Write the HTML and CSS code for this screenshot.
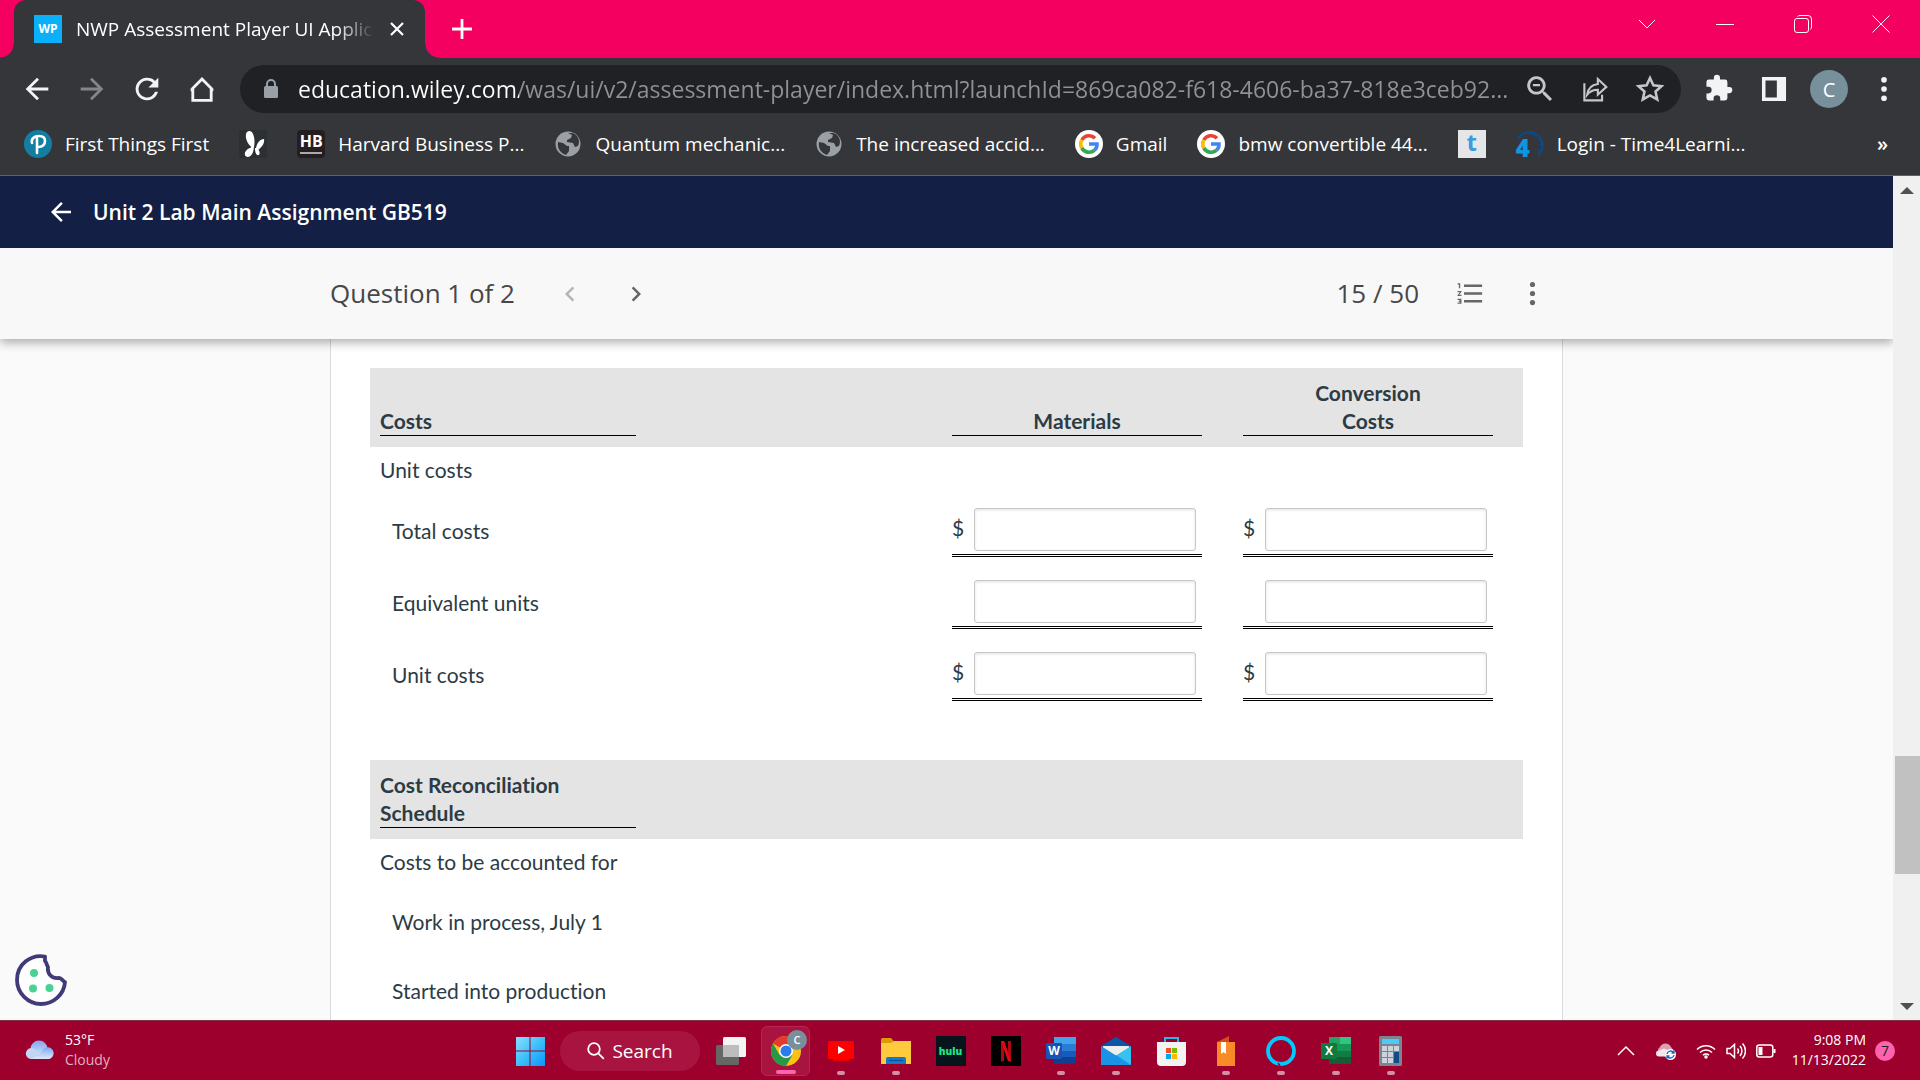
FILE: index.html
```
<!DOCTYPE html>
<html lang="en">
<head>
  <meta charset="UTF-8">
  <meta name="viewport" content="width=device-width, initial-scale=1.0">
  <title>NWP Assessment Player UI Application</title>
  <link rel="stylesheet" href="styles.css">
</head>
<body>
  <!-- browser -->
  <div class="tabstrip">
    <div class="tab">
      <span class="favicon">WP</span>
      <span class="tab-title">NWP Assessment Player UI Applic</span>
      <button class="tab-close" aria-label="Close tab"><svg width="16" height="16" viewBox="0 0 16 16"><path d="M2 2l12 12M14 2L2 14" stroke="#fff" stroke-width="2.2"/></svg></button>
    </div>
    <button class="newtab" aria-label="New tab"><svg width="22" height="22" viewBox="0 0 22 22"><path d="M11 1v20M1 11h20" stroke="#fff" stroke-width="2.8"/></svg></button>
    <div class="winbtns">
      <button aria-label="Tab search"><svg width="18" height="18" viewBox="0 0 18 18"><path d="M1 5l8 8 8-8"/></svg></button>
      <button aria-label="Minimize"><svg width="18" height="18" viewBox="0 0 18 18"><path d="M0 9.500h18"/></svg></button>
      <button aria-label="Restore"><svg width="18" height="18" viewBox="0 0 18 18"><rect x=".5" y="3.500" width="14" height="14" rx="2.500"/><path d="M3.500 1.500q1-1 2.500-1h8q3.500 0 3.500 3.500v8q0 1.500-1 2.500"/></svg></button>
      <button aria-label="Close"><svg width="18" height="18" viewBox="0 0 18 18"><path d="M.5.5l17 17M17.500.5l-17 17"/></svg></button>
    </div>
  </div>
  <div class="navbar">
    <button class="icon" aria-label="Back"><svg viewBox="0 0 24 24"><path d="M20 11H7.830l5.590-5.590L12 4l-8 8 8 8 1.410-1.410L7.830 13H20z"/></svg></button>
    <button class="icon dim" aria-label="Forward"><svg viewBox="0 0 24 24"><path d="M4 11h12.170l-5.590-5.590L12 4l8 8-8 8-1.410-1.410L16.170 13H4z"/></svg></button>
    <button class="icon" aria-label="Reload"><svg viewBox="0 0 24 24"><path d="M17.650 6.350A8 8 0 1 0 19.730 14h-2.080A6 6 0 1 1 12 6c1.660 0 3.140.69 4.220 1.780L13 11h7V4z"/></svg></button>
    <button class="icon" aria-label="Home"><svg viewBox="0 0 24 24"><path d="M12 5L5.500 11.500V20h13v-8.500zM4 12.500h2M18 12.500h2" fill="none" stroke="#f1f3f4" stroke-width="2"/></svg></button>
    <div class="omnibox">
      <svg class="lock" viewBox="0 0 14 20"><path d="M3 8V5a4 4 0 0 1 8 0v3" fill="none" stroke="#9aa0a6" stroke-width="2"/><rect y="7" width="14" height="12" rx="1.500" fill="#9aa0a6"/></svg>
      <input class="url" type="text" aria-label="Address" value="education.wiley.com/was/ui/v2/assessment-player/index.html?launchId=869ca082-f618-4606-ba37-818e3ceb92...">
      <button class="icon grey" aria-label="Zoom"><svg viewBox="0 0 24 24"><path d="M15.500 14h-.8l-.3-.3A6.500 6.500 0 1 0 13.700 14.400l.3.300v.8l5 5 1.500-1.500zm-6 0a4.500 4.500 0 1 1 0-9 4.500 4.500 0 0 1 0 9zM7 8.500h5v1.500H7z"/></svg></button>
      <button class="icon grey" aria-label="Share"><svg viewBox="0 0 24 24"><path d="M14 5l6 5.500-6 5.500v-3.500c-3.500 0-5.500 1-7.500 3.500.5-4 3-7 7.500-7.500zM4.500 8v12H17v-4" fill="none" stroke="#c4c7ca" stroke-width="1.500"/></svg></button>
      <button class="icon grey" aria-label="Bookmark"><svg viewBox="0 0 24 24"><path d="M12 4.200l2.400 5.200 5.700.6-4.200 3.800 1.200 5.600-5.100-2.900-5.100 2.900 1.200-5.600L3.900 10l5.700-.6z" fill="none" stroke="#c4c7ca" stroke-width="1.800"/></svg></button>
    </div>
    <button class="icon" aria-label="Extensions"><svg viewBox="0 0 24 24"><path d="M20.500 11H19V7a2 2 0 0 0-2-2h-4V3.500a2.500 2.500 0 0 0-5 0V5H4a2 2 0 0 0-2 2v3.800h1.500a2.700 2.700 0 0 1 0 5.400H2V20a2 2 0 0 0 2 2h3.800v-1.500a2.700 2.700 0 0 1 5.400 0V22H17a2 2 0 0 0 2-2v-4h1.500a2.500 2.500 0 0 0 0-5z" transform="translate(1.400 1) scale(.87)"/></svg></button>
    <button class="icon" aria-label="Side panel"><svg viewBox="0 0 24 24"><path d="M3.500 3.500h17v17h-17zM6 6v12h8V6z" fill-rule="evenodd"/></svg></button>
    <button class="avatar" aria-label="Profile">C</button>
    <button class="icon" aria-label="Menu"><svg viewBox="0 0 24 24"><circle cx="12" cy="5.500" r="2"/><circle cx="12" cy="12" r="2"/><circle cx="12" cy="18.500" r="2"/></svg></button>
  </div>
  <div class="bookmarks">
    <a class="bookmark" href="#"><svg viewBox="0 0 28 28"><circle cx="14" cy="14" r="14" fill="#137da2"/><path d="M13 23V8M8 13c-1-4 2-7 7-7 4 0 6 2 6 5 0 4-3 6-7 6" fill="none" stroke="#fff" stroke-width="2.600" stroke-linecap="round"/></svg><span>First Things First</span></a>
    <a class="bookmark" href="#" aria-label="Butterfly"><svg viewBox="0 0 28 28"><path fill="#2d3033" d="M0 0h28v28H0z"/><path d="M14 18C8 15 5 6 8 2c5-4 9 5 7 15M15 15c0 5-1 11-6 12-5 0-4-7 2-9M17 18c1-5 4-9 8-9 1 5-3 9-7 12M16 18c3 0 6 4 4 7-3 1-4-3-4-7" fill="#fff"/></svg></a>
    <a class="bookmark" href="#"><span class="hb"><b>HB</b><i></i></span><span>Harvard Business P...</span></a>
    <a class="bookmark" href="#"><svg viewBox="0 0 28 28"><circle cx="14" cy="14" r="12.500" fill="#9aa0a6"/><path d="M4 12l5 1 4 3h2v5l-3 4C6 23 3 18 4 12zM14 3l4 2-1 3-4 2v2l6 1 2 4 3-1c3-6-1-12-6-13z" fill="#35363a"/></svg><span>Quantum mechanic...</span></a>
    <a class="bookmark" href="#"><svg viewBox="0 0 28 28"><circle cx="14" cy="14" r="12.500" fill="#9aa0a6"/><path d="M4 12l5 1 4 3h2v5l-3 4C6 23 3 18 4 12zM14 3l4 2-1 3-4 2v2l6 1 2 4 3-1c3-6-1-12-6-13z" fill="#35363a"/></svg><span>The increased accid...</span></a>
    <a class="bookmark" href="#"><svg viewBox="0 0 28 28"><circle cx="14" cy="14" r="14" fill="#fff"/><g fill="none" stroke-width="3.600"><path d="M20 8.200A8.300 8.300 0 0 0 6.800 10" stroke="#ea4335"/><path d="M6.800 10a8.300 8.300 0 0 0 0 8" stroke="#fbbc05"/><path d="M6.800 18A8.300 8.300 0 0 0 19.500 20.200" stroke="#34a853"/><path d="M19.500 20.200A8 8 0 0 0 22 14h-8" stroke="#4285f4"/></g></svg><span>Gmail</span></a>
    <a class="bookmark" href="#"><svg viewBox="0 0 28 28"><circle cx="14" cy="14" r="14" fill="#fff"/><g fill="none" stroke-width="3.600"><path d="M20 8.200A8.300 8.300 0 0 0 6.800 10" stroke="#ea4335"/><path d="M6.800 10a8.300 8.300 0 0 0 0 8" stroke="#fbbc05"/><path d="M6.800 18A8.300 8.300 0 0 0 19.500 20.200" stroke="#34a853"/><path d="M19.500 20.200A8 8 0 0 0 22 14h-8" stroke="#4285f4"/></g></svg><span>bmw convertible 44...</span></a>
    <a class="bookmark" href="#"><span class="tsite">t</span></a>
    <a class="bookmark" href="#"><span class="four">4<svg viewBox="0 0 28 28"><path d="M2 9A13 13 0 1 1 22 25" fill="none" stroke="#0b4a82" stroke-width="2.500"/><path d="M14 2v4M20 4l-2 3M25 9l-3 2M26 15h-4M24 21l-3-2" stroke="#0b4a82" stroke-width="1.500"/></svg></span><span>Login - Time4Learni...</span></a>
    <button class="more" aria-label="More bookmarks">»</button>
  </div>

  <!-- page -->
  <div class="viewport">
    <div class="player">
      <header class="header">
        <a href="#" class="back" aria-label="Back"><svg viewBox="0 0 24 24"><path d="M20 11H7.830l5.590-5.590L12 4l-8 8 8 8 1.410-1.410L7.830 13H20z"/></svg></a>
        <h1>Unit 2 Lab Main Assignment GB519</h1>
      </header>
      <div class="subbar">
        <div class="subbar-inner">
          <h2>Question 1 of 2</h2>
          <button class="step off" aria-label="Previous"><svg viewBox="0 0 24 24"><path d="M15.410 7.410L14 6l-6 6 6 6 1.410-1.410L10.830 12z"/></svg></button>
          <button class="step" aria-label="Next"><svg viewBox="0 0 24 24"><path d="M8.590 16.590L10 18l6-6-6-6-1.410 1.410L13.170 12z"/></svg></button>
          <span class="score">15 / 50</span>
          <button class="tool" aria-label="Question list"><svg viewBox="0 0 24 24"><path d="M2 17h2v.5H3v1h1v.5H2v1h3v-4H2v1zm1-9h1V4H2v1h1v3zm-1 3h1.800L2 13.100v.9h3v-1H3.200L5 10.900V10H2v1zm5-6v2h14V5H7zm0 14h14v-2H7v2zm0-6h14v-2H7v2z"/></svg></button>
          <button class="tool" aria-label="More"><svg viewBox="0 0 24 24"><circle cx="12" cy="5" r="2"/><circle cx="12" cy="12" r="2"/><circle cx="12" cy="19" r="2"/></svg></button>
        </div>
      </div>
      <main class="scroll">
        <div class="card">
          <table class="sheet">
            <colgroup>
              <col class="c-label"><col class="c-space"><col class="c-num"><col class="c-gap"><col class="c-num"><col class="c-end">
            </colgroup>
            <tr class="band">
              <th scope="col"><div class="rule">Costs</div></th>
              <td></td>
              <th scope="col"><div class="rule mid">Materials</div></th>
              <td></td>
              <th scope="col"><div class="rule mid">Conversion<br>Costs</div></th>
              <td></td>
            </tr>
            <tr class="group"><td colspan="6">Unit costs</td></tr>
            <tr class="entry">
              <td colspan="2">Total costs</td>
              <td class="num"><label class="amount"><span>$</span><input type="text" aria-label="Total costs, materials"></label></td>
              <td></td>
              <td class="num"><label class="amount"><span>$</span><input type="text" aria-label="Total costs, conversion"></label></td>
              <td></td>
            </tr>
            <tr class="entry">
              <td colspan="2">Equivalent units</td>
              <td class="num"><label class="amount"><span></span><input type="text" aria-label="Equivalent units, materials"></label></td>
              <td></td>
              <td class="num"><label class="amount"><span></span><input type="text" aria-label="Equivalent units, conversion"></label></td>
              <td></td>
            </tr>
            <tr class="entry">
              <td colspan="2">Unit costs</td>
              <td class="num"><label class="amount"><span>$</span><input type="text" aria-label="Unit costs, materials"></label></td>
              <td></td>
              <td class="num"><label class="amount"><span>$</span><input type="text" aria-label="Unit costs, conversion"></label></td>
              <td></td>
            </tr>
            <tr class="blank"><td colspan="6"></td></tr>
            <tr class="band">
              <th scope="col"><div class="rule">Cost Reconciliation Schedule</div></th>
              <td colspan="5"></td>
            </tr>
            <tr class="group"><td colspan="6">Costs to be accounted for</td></tr>
            <tr class="line"><td colspan="6">Work in process, July 1</td></tr>
            <tr class="line"><td colspan="6">Started into production</td></tr>
          </table>
        </div>
      </main>
      <button class="cookie" aria-label="Cookie settings">
        <svg viewBox="0 0 52 52"><path d="M30 2.500C16 0 2 10 2 26c0 13 11 24 24 24 12 0 23-9 24-22-3-1-3-4-6-4-7 1-12-4-11-11-2-3-1-4-3-6z" fill="#fff" stroke="#403a78" stroke-width="3.800" stroke-linejoin="round"/><g fill="#4ad295"><circle cx="19" cy="19" r="4"/><circle cx="18" cy="34.500" r="4"/><circle cx="34.500" cy="34" r="4"/></g></svg>
      </button>
    </div>
    <div class="scrollbar">
      <button aria-label="Scroll up"><svg width="14" height="7" viewBox="0 0 14 7"><path d="M0 7l7-7 7 7z"/></svg></button>
      <div class="before"></div>
      <div class="thumb"></div>
      <div class="after"></div>
      <button aria-label="Scroll down"><svg width="14" height="7" viewBox="0 0 14 7"><path d="M0 0l7 7 7-7z"/></svg></button>
    </div>
  </div>

  <!-- windows taskbar -->
  <div class="taskbar">
    <div class="weather">
      <svg viewBox="0 0 30 20"><defs><linearGradient id="cl" x1="0" y1="0" x2="0" y2="1"><stop offset="0" stop-color="#7ea6ee"/><stop offset="1" stop-color="#dfe9fa"/></linearGradient></defs><circle cx="14" cy="9" r="8.500" fill="url(#cl)"/><path d="M5.500 19a5.500 5.500 0 1 1 3-10.500c2 .5 4 2.500 5 5L17 19z" fill="#c3d5f5"/><path d="M6 19h18a6 6 0 1 0-7-8c-1 3-5 5-11 8z" fill="url(#cl)"/></svg>
      <div>53°F<br><small>Cloudy</small></div>
    </div>
    <div class="apps">
      <button class="app" aria-label="Start"><svg viewBox="0 0 30 30"><defs><linearGradient id="wn" x1="0" y1="0" x2="1" y2="1"><stop offset="0" stop-color="#8be0ff"/><stop offset=".5" stop-color="#3cc1fb"/><stop offset="1" stop-color="#0a94fa"/></linearGradient></defs><path fill="url(#wn)" d="M1 1h13.500v13.500H1zM15.500 1H30v13.500H15.500zM1 15.500h13.500V30H1zM15.500 15.500H30V30H15.500z"/></svg></button>
      <button class="search"><svg viewBox="0 0 18 18"><circle cx="7" cy="7" r="5.800"/><path d="M11.300 11.300l5.500 5.500"/></svg>Search</button>
      <button class="app" aria-label="Task view"><svg viewBox="0 0 30 30"><rect y="9" width="23" height="20" rx="1.500" fill="#666"/><rect x="7" y="1" width="23" height="20" rx="1.500" fill="#f4f4f4"/><path d="M7 9h16v12H8.500Q7 21 7 19.500z" fill="#bdbdbd"/></svg></button>
      <button class="app active" aria-label="Chrome"><svg viewBox="0 0 30 30"><circle cx="15" cy="15" r="15" fill="#fbc116"/><path d="M15 15L2 7.500A15 15 0 0 1 28 7.500z" fill="#e33b2e"/><path d="M2 7.500A15 15 0 0 0 15 30l6.500-11.200L8.500 18.800z" fill="#279847"/><circle cx="15" cy="15" r="7" fill="#fff"/><circle cx="15" cy="15" r="5.500" fill="#2c7bea"/></svg><span class="badge">C</span></button>
      <button class="app open" aria-label="YouTube"><svg viewBox="0 0 30 30"><rect x="2" y="5" width="26" height="18" rx="1.500" fill="red"/><path d="M7 23h16v2H7z" fill="#e00"/><path d="M12 10l7 4-7 4z" fill="#fff"/></svg></button>
      <button class="app open" aria-label="File Explorer"><svg viewBox="0 0 30 30"><path d="M0 3.500Q0 2 1.500 2H10l3 3.500V9H0z" fill="#dc9a08"/><path d="M0 7h10l3-2h17v23H0z" fill="#fecb3e"/><path d="M5 28v-5q0-2 2-2h16q2 0 2 2v5z" fill="#1279cf"/><path d="M8 24.500h14" stroke="#0a4f91"/></svg></button>
      <button class="app" aria-label="Hulu"><span class="hulu">hulu</span></button>
      <button class="app" aria-label="Netflix"><svg viewBox="0 0 30 30"><path d="M0 0h30v30H0z"/><path d="M10 5h3v20l-3 .5zM17 5h3v20.500l-3-.5z" fill="#b00710"/><path d="M10 5h3.200L20 25.500l-3-.5z" fill="#e50914"/></svg></button>
      <button class="app open" aria-label="Word"><svg viewBox="0 0 30 30"><path d="M8 1h22v7H8z" fill="#41a5ee"/><path d="M8 8h22v7H8z" fill="#2b7cd3"/><path d="M8 15h22v6H8z" fill="#185abd"/><path d="M8 21h22v7H8z" fill="#103f91"/><rect y="7" width="16" height="16" rx="1" fill="#1853b4"/><text x="8" y="19" class="logo">W</text></svg></button>
      <button class="app open" aria-label="Mail"><svg viewBox="0 0 30 30"><path d="M0 10L15 1l15 9v10H0z" fill="#0758a8"/><path d="M2 10h26v12H2z" fill="#eee"/><path d="M0 10l30 19H0z" fill="#1a93e6"/><path d="M30 10v19H0z" fill="#35c1f1"/><path d="M15 19l15 10H0z" fill="#1a93e6"/></svg></button>
      <button class="app" aria-label="Microsoft Store"><svg viewBox="0 0 30 30"><path d="M9 7V2h13v5" fill="none" stroke="#29b5ea" stroke-width="2"/><path d="M1 6h29v20q0 4-4 4H5q-4 0-4-4z" fill="#f3f3f3"/><path d="M10 12h5v5h-5z" fill="#f25022"/><path d="M16 12h5v5h-5z" fill="#7fba00"/><path d="M10 18h5v5h-5z" fill="#00a4ef"/><path d="M16 18h5v5h-5z" fill="#ffb900"/></svg></button>
      <button class="app open" aria-label="Books"><svg viewBox="0 0 30 30"><path d="M6 6l12-6v6z" fill="#d04e1c"/><path d="M6 6h18v24H6z" fill="#f88b27"/><path d="M10 6h5v12l-2.500-2L10 18z" fill="#fff"/></svg></button>
      <button class="app open" aria-label="Alexa"><svg viewBox="0 0 30 30"><circle cx="15" cy="15" r="13" fill="none" stroke="#00caff" stroke-width="3.800"/><path d="M12 27l2 3" stroke="#9e002e" stroke-width="1.500"/></svg></button>
      <button class="app open" aria-label="Excel"><svg viewBox="0 0 30 30"><path d="M8 1h22v7H8z" fill="#21a366"/><path d="M19 1h11v7H19z" fill="#33c481"/><path d="M8 8h22v7H8z" fill="#159957"/><path d="M8 15h22v6H8z" fill="#107c41"/><path d="M8 21h22v7H8z" fill="#185c37"/><rect y="7" width="16" height="16" rx="1" fill="#0f7a3c"/><text x="8" y="19" class="logo">X</text></svg></button>
      <button class="app open" aria-label="Calculator"><svg viewBox="0 0 30 30"><rect x="3" width="23" height="30" rx="1.500" fill="#7c858f"/><path d="M6 3h17v5H6z" fill="#4ccbf4"/><path d="M6 10h5v5H6zM12 10h5v5h-5zM18 10h5v5h-5zM6 16h5v5H6zM12 16h5v5h-5zM6 22h5v5H6zM12 22h5v5h-5z" fill="#ccd3da"/><path d="M18 16h5v11h-5z" fill="#154a88"/></svg></button>
    </div>
    <div class="tray">
      <svg class="up" viewBox="0 0 20 20"><path d="M2 14l8-8 8 8"/></svg>
      <svg class="drive" viewBox="0 0 20 20"><path d="M4 13a4 4 0 0 1 0-7 6 6 0 0 1 11 0l3 4z" fill="#dba0b1"/><path d="M3 15.500a3 3 0 0 1 0-6l5-2 9 4v4z" fill="#f4e6ea"/><circle cx="14.500" cy="13.500" r="5.500" fill="#fff"/><path d="M11 13a3.600 3.600 0 0 1 6.500-1.500M18 14a3.600 3.600 0 0 1-6.500 1.500M18 9.500v2.500h-2.500M11 17.500V15h2.500" stroke="#1669bd" stroke-width="1.400" fill="none"/></svg>
      <svg viewBox="0 0 20 20"><path d="M1 8.500a12.700 12.700 0 0 1 18 0M4 11.500a8.500 8.500 0 0 1 12 0M7 14.300a4.300 4.300 0 0 1 6 0"/><circle cx="10" cy="16" r="1" /></svg>
      <svg viewBox="0 0 20 20"><path d="M1 7.500h3l4.500-4v13l-4.500-4H1zM11.500 7.500a4 4 0 0 1 0 5M14 5a7.500 7.500 0 0 1 0 10M16.500 2.500a11 11 0 0 1 0 15"/></svg>
      <svg viewBox="0 0 20 20"><rect x=".8" y="4" width="16" height="12" rx="2.500"/><path d="M3.500 7h2v6h-2zM18.500 8v4" stroke-width="2"/></svg>
      <div class="clock">9:08 PM<br>11/13/2022</div>
      <span class="count">7</span>
    </div>
  </div>
</body>
</html>
```
FILE: styles.css
```
*{
  margin: 0;
  padding: 0;
  box-sizing: border-box;
}
body{
  height: 100vh;
  display: flex;
  flex-direction: column;
  overflow: hidden;
  font-family: "Open Sans", "Noto Sans", sans-serif;
  background: #35363a;
  color: #fff;
}
button{
  display: flex;
  align-items: center;
  justify-content: center;
  border: none;
  background: none;
  color: inherit;
  font-family: inherit;
}
a{
  color: inherit;
  text-decoration: none;
}
svg{
  display: block;
  flex: none;
}

/* tab strip */
.tabstrip{
  height: 58px;
  flex: none;
  display: flex;
  padding-left: 14px;
  background: #f40060;
}
.tab{
  position: relative;
  width: 411px;
  display: flex;
  align-items: center;
  padding: 0 18px 0 20px;
  background: #35363a;
  border-radius: 12px 12px 0 0;
}
.tab::before,
.tab::after{
  content: "";
  position: absolute;
  bottom: 0;
  width: 14px;
  height: 14px;
}
.tab::before{
  left: -14px;
  background: radial-gradient(circle at 0 0, #f40060 13px, #35363a 14px);
}
.tab::after{
  right: -14px;
  background: radial-gradient(circle at 100% 0, #f40060 13px, #35363a 14px);
}
.favicon{
  width: 28px;
  height: 28px;
  margin-right: 14px;
  flex: none;
  background: #0bb0fb;
  font-size: 12px;
  font-weight: 700;
  line-height: 28px;
  text-align: center;
}
.tab-title{
  flex: 1;
  overflow: hidden;
  white-space: nowrap;
  font-size: 19px;
  -webkit-mask-image: linear-gradient(90deg, #000 260px, transparent 298px);
  mask-image: linear-gradient(90deg, #000 260px, transparent 298px);
}
.tab-close{
  width: 20px;
  margin-left: 12px;
}
.newtab{
  width: 74px;
}
.winbtns{
  display: flex;
  margin-left: auto;
  height: 48px;
}
.winbtns button{
  width: 78px;
}
.winbtns svg{
  fill: none;
  stroke: #fff;
}

/* toolbar */
.navbar{
  flex: none;
  display: flex;
  align-items: center;
  gap: 21px;
  padding: 7px 19px 7px 20px;
}
.icon{
  width: 34px;
  height: 34px;
  flex: none;
}
.icon svg{
  width: 34px;
  height: 34px;
  fill: #f1f3f4;
}
.icon.dim svg{
  fill: #84868a;
}
.icon.grey svg{
  fill: #c4c7ca;
}
.omnibox{
  flex: 1;
  display: flex;
  align-items: center;
  gap: 21px;
  height: 48px;
  padding: 0 14px 0 24px;
  border-radius: 24px;
  background: #202124;
}
.lock{
  width: 14px;
  height: 20px;
}
.url{
  flex: 1;
  min-width: 0;
  margin: 0 -12px 0 -1px;
  border: none;
  outline: none;
  font-family: inherit;
  font-size: 23px;
  line-height: 32px;
  color: transparent;
  background: linear-gradient(90deg, #fff 221px, #8f9296 221px);
  -webkit-background-clip: text;
  background-clip: text;
}
.avatar{
  width: 38px;
  height: 38px;
  margin: 0 -2px;
  border-radius: 50%;
  background: #78909c;
  font-size: 20px;
}
.bookmarks{
  flex: none;
  display: flex;
  align-items: center;
  gap: 30px;
  height: 56px;
  padding: 0 32px 8px 24px;
  border-bottom: 1px solid #5f6063;
  font-size: 19px;
  white-space: nowrap;
}
.bookmark{
  display: flex;
  align-items: center;
  gap: 13px;
}
.bookmark svg,
.hb,
.tsite,
.four{
  width: 28px;
  height: 28px;
}
.hb{
  border-radius: 4px;
  background: #231f20;
  font-size: 16px;
  line-height: 22px;
  text-align: center;
}
.hb i{
  display: block;
  height: 2px;
  margin: 0 3px;
  background: #aaa;
}
.tsite{
  background: #e4e6e8;
  color: #3a9be0;
  font-size: 24px;
  font-weight: 700;
  line-height: 24px;
  text-align: center;
}
.four{
  position: relative;
  color: #0f96e0;
  font-size: 24px;
  font-weight: 800;
  line-height: 36px;
}
.four svg{
  position: absolute;
  top: 0;
  left: 0;
}
.more{
  margin-left: auto;
  font-size: 20px;
  font-weight: 600;
}

/* assessment player */
.viewport{
  flex: 1;
  min-height: 0;
  display: flex;
}
.player{
  position: relative;
  flex: 1;
  min-width: 0;
  display: flex;
  flex-direction: column;
  background: #fafafa;
}
.header{
  flex: none;
  display: flex;
  align-items: center;
  gap: 17px;
  height: 72px;
  padding: 0 46px;
  background: #141f45;
}
.header h1{
  font-size: 21px;
  font-weight: 600;
}
.back svg{
  width: 30px;
  height: 30px;
  fill: #fff;
}
.subbar{
  z-index: 1;
  flex: none;
  background: #f8f8f8;
  box-shadow: 0 3px 10px rgba(0,0,0,.35);
  clip-path: inset(0 0 -20px 0);
}
.subbar-inner{
  display: flex;
  align-items: center;
  height: 91px;
  max-width: 1233px;
  margin: 0 auto;
  color: #474747;
  font-size: 26px;
}
.subbar h2{
  margin-right: 22px;
  padding-bottom: 2px;
  font-size: 26px;
  font-weight: 400;
}
.subbar svg{
  width: 31px;
  height: 31px;
  fill: #666;
}
.step{
  width: 66px;
  height: 48px;
}
.subbar .step svg{
  width: 30px;
  height: 30px;
}
.subbar .off svg{
  fill: #b5b5b5;
}
.score{
  margin: 0 20px 0 auto;
  padding-bottom: 2px;
}
.tool{
  width: 62px;
  height: 48px;
}
.scroll{
  flex: 1;
  min-height: 0;
  overflow: hidden;
}
.card{
  max-width: 1233px;
  min-height: 100%;
  margin: 0 auto;
  padding: 29px 39px;
  border: solid #d8dadb;
  border-width: 0 1px;
  background: #fff;
  color: #2d3b45;
  font-family: Lato, sans-serif;
  font-size: 21px;
  font-variant-ligatures: none;
  line-height: 28px;
}
.sheet{
  width: 100%;
  table-layout: fixed;
  border-collapse: collapse;
  text-align: left;
}
.c-label{
  width: 276px;
}
.c-num{
  width: 270px;
}
.c-gap{
  width: 21px;
}
.c-end{
  width: 20px;
}
.sheet th,
.sheet td{
  padding: 0 10px;
}
.band{
  background: #e4e4e4;
}
.sheet .band th{
  padding: 11px 10px;
  vertical-align: bottom;
}
.rule{
  border-bottom: 1px solid #000;
}
.mid{
  text-align: center;
}
.sheet .group td{
  height: 50px;
  padding-bottom: 4px;
}
.entry td{
  height: 72px;
}
.line td{
  height: 69px;
}
.blank td{
  height: 47px;
}
.sheet .entry td:first-child,
.sheet .line td{
  padding-left: 22px;
  padding-bottom: 4px;
}
.sheet .num{
  padding-top: 11px;
  vertical-align: top;
}
.amount{
  display: flex;
  align-items: center;
  padding: 0 6px 3px 0;
  border-bottom: 3px double #000;
}
.amount span{
  width: 22px;
  flex: none;
  padding-bottom: 4px;
}
.amount input{
  flex: 1;
  min-width: 0;
  height: 43px;
  padding: 0 8px;
  border: 1px solid #c7c7c7;
  border-radius: 3px;
  box-shadow: inset 0 1px 3px rgba(0,0,0,.12);
  font: inherit;
}
.cookie{
  position: absolute;
  left: 15px;
  bottom: 14px;
}
.cookie svg{
  width: 52px;
  height: 52px;
}
.scrollbar{
  width: 27px;
  flex: none;
  display: flex;
  flex-direction: column;
  background: #f0f0f0;
}
.scrollbar button{
  height: 28px;
}
.scrollbar svg{
  fill: #505050;
}
.before{
  flex: 14;
}
.after{
  flex: 3;
}
.thumb{
  height: 118px;
  margin-left: 2px;
  background: #c1c1c1;
}

/* taskbar */
.taskbar{
  flex: none;
  display: grid;
  grid-template-columns: 1fr auto 1fr;
  align-items: center;
  height: 60px;
  border-top: 1px solid #82304c;
  background: #9e002e;
  font-size: 14px;
  line-height: 20px;
}
.weather{
  display: flex;
  align-items: center;
  gap: 10px;
  padding: 0 0 2px 25px;
}
.weather svg{
  width: 30px;
  height: 20px;
}
.weather small{
  font-size: 14px;
  color: #e0b0be;
}
.apps{
  display: flex;
  align-items: center;
}
.app{
  position: relative;
  width: 55px;
  height: 50px;
}
.app svg{
  width: 30px;
  height: 30px;
}
.open::after,
.active::after{
  content: "";
  position: absolute;
  bottom: 1px;
  left: 50%;
  width: 8px;
  height: 4px;
  margin-left: -4px;
  border-radius: 2px;
  background: #d58fa5;
}
.active::after{
  width: 20px;
  margin-left: -10px;
  background: #ff62ae;
}
.active{
  width: 49px;
  margin: 0 3px;
  border: 1px solid #b22850;
  border-radius: 6px;
  background: #a8143f;
}
.badge{
  position: absolute;
  top: 3px;
  right: 2px;
  width: 20px;
  border-radius: 50%;
  background: #78909c;
  font-size: 11px;
  font-weight: 600;
  line-height: 20px;
}
.hulu{
  width: 30px;
  height: 30px;
  background: #07141b;
  color: #1ce783;
  font-size: 10px;
  font-weight: 800;
  line-height: 30px;
}
.logo{
  fill: #fff;
  font-size: 12px;
  font-weight: 700;
  text-anchor: middle;
}
.search{
  gap: 7px;
  width: 140px;
  height: 40px;
  margin: 0 3px;
  border-radius: 20px;
  background: #a8143f;
  font-size: 19px;
}
.search svg{
  width: 18px;
  height: 18px;
  fill: none;
  stroke: #fff;
  stroke-width: 1.800;
}
.tray{
  display: flex;
  align-items: center;
  justify-content: flex-end;
  gap: 10px;
  padding-right: 25px;
}
.tray svg{
  width: 20px;
  height: 20px;
  fill: none;
  stroke: #fff;
  stroke-width: 1.500;
}
.tray .up{
  margin-right: 10px;
}
.tray .drive{
  margin-right: 10px;
  stroke: none;
}
.clock{
  width: 80px;
  margin-right: -1px;
  padding-bottom: 2px;
  text-align: right;
}
.count{
  width: 20px;
  border-radius: 50%;
  background: #ff62ae;
  color: #222;
  text-align: center;
}
```
